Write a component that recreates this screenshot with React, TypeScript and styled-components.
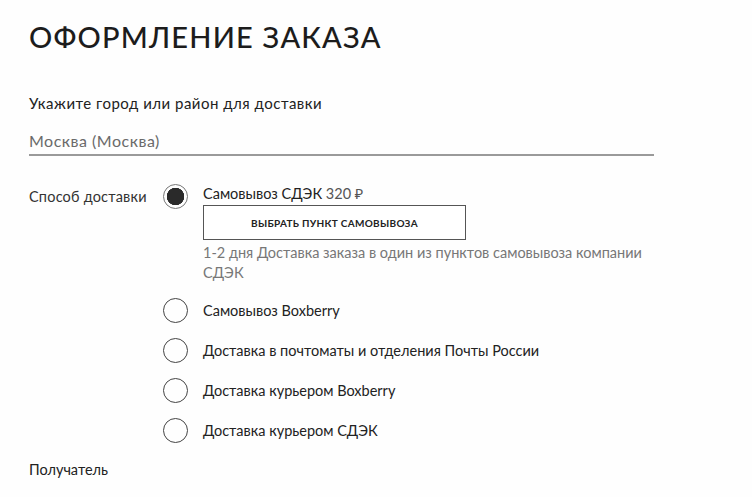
import * as React from 'react';
import styled, { createGlobalStyle } from 'styled-components';

const Global = createGlobalStyle`
	html, body {
		margin: 0;
		padding: 0;
		background: #fefefe;
	}
	body {
		font-family: Lato, "Noto Sans", sans-serif;
		color: #222;
	}
`;

const Page = styled.div`
	padding: 17px 29px 0;
	width: 625px;
`;

const Title = styled.h1`
	margin: 0;
	font-size: 29px;
	font-weight: 500;
	letter-spacing: 1.2px;
	line-height: 40px;
	color: #1c1c1c;
`;

const FieldLabel = styled.div`
	margin-top: 36px;
	font-size: 15px;
	letter-spacing: 0.5px;
	line-height: 20px;
	color: #222;
`;

const CityInput = styled.div`
	margin-top: 18px;
	padding-bottom: 3px;
	border-bottom: 2px solid #9a9a9a;
	font-size: 16px;
	letter-spacing: 0.5px;
	line-height: 20px;
	color: #6a6a6a;
`;

const DeliveryRow = styled.div`
	display: grid;
	grid-template-columns: 134px 1fr;
	margin-top: 28px;
`;

const RowLabel = styled.div`
	font-size: 14.5px;
	letter-spacing: 0.2px;
	line-height: 25px;
	color: #333;
`;

const Options = styled.div`
	display: flex;
	flex-direction: column;
	gap: 15px;
`;

const Option = styled.div`
	display: grid;
	grid-template-columns: 40px 1fr;
`;

const Radio = styled.span<{ $checked?: boolean }>`
	box-sizing: border-box;
	display: block;
	width: 25px;
	height: 25px;
	border-radius: 50%;
	border: 1px solid ${p => (p.$checked ? '#777' : '#444')};
	background: ${p => (p.$checked ? 'radial-gradient(circle, #2a2a2a 0 8.5px, transparent 9px)' : 'transparent')};
`;

const OptionName = styled.div`
	font-size: 14.5px;
	line-height: 20px;
	color: #222;
`;

const Price = styled.span`
	color: #555;
`;

const PickButton = styled.button`
	display: block;
	box-sizing: border-box;
	width: 263px;
	height: 35px;
	margin-top: 1px;
	background: #fff;
	border: 1px solid #555;
	font-family: inherit;
	font-size: 10px;
	font-weight: 700;
	letter-spacing: 0.3px;
	color: #222;
	padding: 0;
`;

const Desc = styled.div`
	margin-top: 3px;
	font-size: 14.5px;
	line-height: 20px;
	color: #777;
	max-width: 460px;
`;

const Section = styled.div`
	margin-top: 17px;
	font-size: 14.5px;
	line-height: 20px;
	color: #222;
`;

const Center = styled.div`
	display: flex;
	align-items: center;
	min-height: 25px;
`;

const others = [
	'Самовывоз Boxberry',
	'Доставка в почтоматы и отделения Почты России',
	'Доставка курьером Boxberry',
	'Доставка курьером СДЭК',
];

export default function App() {
	return (
		<>
			<Global />
			<Page>
				<Title>ОФОРМЛЕНИЕ ЗАКАЗА</Title>
				<FieldLabel>Укажите город или район для доставки</FieldLabel>
				<CityInput>Москва (Москва)</CityInput>
				<DeliveryRow>
					<RowLabel>Способ доставки</RowLabel>
					<Options>
						<Option>
							<Radio $checked />
							<div>
								<OptionName>
									Самовывоз СДЭК <Price>320 ₽</Price>
								</OptionName>
								<PickButton>ВЫБРАТЬ ПУНКТ САМОВЫВОЗА</PickButton>
								<Desc>1-2 дня Доставка заказа в один из пунктов самовывоза компании СДЭК</Desc>
							</div>
						</Option>
						{others.map(name => (
							<Option key={name}>
								<Radio />
								<Center>
									<OptionName>{name}</OptionName>
								</Center>
							</Option>
						))}
					</Options>
				</DeliveryRow>
				<Section>Получатель</Section>
			</Page>
		</>
	);
}
